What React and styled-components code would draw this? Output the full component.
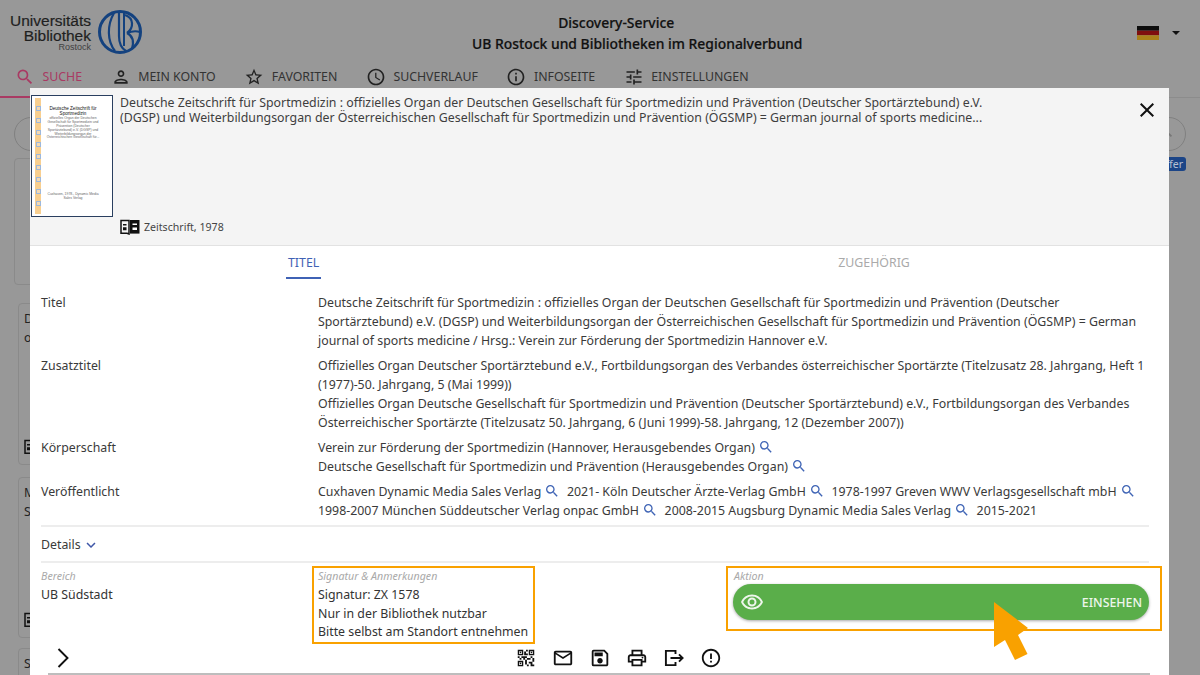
import React from "react";
import styled, { createGlobalStyle } from "styled-components";
import {
  MdAccessTime,
  MdClose,
  MdErrorOutline,
  MdExpandMore,
  MdInfoOutline,
  MdOutlineLocalPrintshop,
  MdOutlineMailOutline,
  MdOutlinePerson,
  MdOutlineRemoveRedEye,
  MdOutlineSave,
  MdOutlineTune,
  MdQrCode2,
  MdSearch,
  MdStarBorder,
} from "react-icons/md";

const GlobalStyle = createGlobalStyle`
  html, body {
    margin: 0;
    height: 100%;
    overflow: hidden;
    background: #989898;
  }
  body {
    font-family: "Noto Sans", "Open Sans", sans-serif;
    color: #3a3a3a;
  }
  * {
    box-sizing: border-box;
  }
`;

const navItems = [
  { label: "SUCHE", icon: MdSearch, active: true },
  { label: "MEIN KONTO", icon: MdOutlinePerson },
  { label: "FAVORITEN", icon: MdStarBorder },
  { label: "SUCHVERLAUF", icon: MdAccessTime },
  { label: "INFOSEITE", icon: MdInfoOutline },
  { label: "EINSTELLUNGEN", icon: MdOutlineTune },
];

const backgroundCards = [
  { height: 127, top: 0, left: 14, lines: [] },
  { height: 162, top: 18, left: 18, lines: ["D", "o"], icon: true },
  { height: 161, top: 12, left: 18, lines: ["M", "S"], icon: true },
  { height: 60, top: 10, left: 18, lines: ["S"] },
];

const Logo = () => (
  <LogoWrapper>
    <LogoText>
      <span>Universitäts</span>
      <span>Bibliothek</span>
      <small>Rostock</small>
    </LogoText>
    <svg width="46" height="46" viewBox="0 0 46 46" fill="none" stroke="#14427f">
      <circle cx="23" cy="23" r="20.5" strokeWidth="3" />
      <path d="M17 4C10 16 10 32 18 42" strokeWidth="2.2" />
      <path d="M22 3.5V27c0 8 2 12 7 15" strokeWidth="2.2" />
      <path d="M27 4v33" strokeWidth="2" />
      <path d="M28 6c9 3 9 13 2 18 5-2 10-2 13-1M30 24c6 3 7 9 5 16" strokeWidth="2.2" />
    </svg>
  </LogoWrapper>
);

const Flag = () => (
  <svg width="22" height="14" viewBox="0 0 22 14">
    <rect width="22" height="4.7" fill="#0d0d0d" />
    <rect y="4.7" width="22" height="4.6" fill="#7f0f0f" />
    <rect y="9.3" width="22" height="4.7" fill="#a9811a" />
  </svg>
);

const Thumbnail = () => (
  <Cover>
    <Strip>
      {Array.from({ length: 9 }).map((_, i) => (
        <StripHole key={i} />
      ))}
    </Strip>
    <CoverText>
      <CoverTitle>
        Deutsche Zeitschrift für
        <br />
        Sportmedizin
      </CoverTitle>
      <CoverBody>
        offizielles Organ der Deutschen
        <br />
        Gesellschaft für Sportmedizin und
        <br />
        Prävention (Deutscher
        <br />
        Sportärztebund) e.V. (DGSP) und
        <br />
        Weiterbildungsorgan der
        <br />
        Österreichischen Gesellschaft für...
      </CoverBody>
      <CoverFooter>
        Cuxhaven, 1978-, Dynamic Media
        <br />
        Sales Verlag
      </CoverFooter>
    </CoverText>
  </Cover>
);

const JournalIcon = () => (
  <svg width="20" height="16" viewBox="0 0 20 16">
    <path d="M1 1.5h8v13.5l-2-.8H1z" fill="none" stroke="#111" strokeWidth="1.5" />
    <path d="M10 1h9.5v13.6H10z" fill="#111" />
    <path d="M3 5h3.5v1.5H3zM3 8.3h3.5v3H3z" fill="#111" />
    <path d="M12.5 4.5h4.5v1.5h-4.5zM12.5 8.5h4.5v2.5h-4.5z" fill="#fff" />
  </svg>
);

const ExportIcon = () => (
  <svg width="22" height="22" viewBox="0 0 22 22" fill="none" stroke="#111" strokeWidth="1.9">
    <path d="M12.5 7V3.9H2.9v14.2h9.6V15" />
    <path d="M7.5 11h12M16 7.4l3.6 3.6-3.6 3.6" />
  </svg>
);

const ChevronIcon = () => (
  <svg width="12" height="20" viewBox="0 0 12 20" fill="none" stroke="#111" strokeWidth="1.9">
    <path d="M1.5 1l9 9-9 9" />
  </svg>
);

const Hit = () => (
  <SearchLink>
    <MdSearch />
  </SearchLink>
);

export default function App() {
  return (
    <>
      <GlobalStyle />
      <Page>
        <Header>
          <Logo />
          <HeaderTitle>
            <HeaderFirstLine>Discovery-Service</HeaderFirstLine>
            <div>UB Rostock und Bibliotheken im Regionalverbund</div>
          </HeaderTitle>
          <LanguageSwitch>
            <Flag />
            <Caret />
          </LanguageSwitch>
        </Header>

        <Nav>
          {navItems.map(({ label, icon: Icon, active }) => (
            <NavItem key={label} $active={active}>
              <Icon />
              {label}
            </NavItem>
          ))}
        </Nav>

        <SearchRow>
          <RoundField />
          <RoundField>
            <MdSearch />
          </RoundField>
        </SearchRow>
        <ResultBadge>Treffer</ResultBadge>

        <CardColumn>
          {backgroundCards.map((card, i) => (
            <ResultCard key={i} $height={card.height} $top={card.top} $left={card.left}>
              {card.lines.map((line) => (
                <div key={line}>{line}</div>
              ))}
              {card.icon && (
                <CardIconMark>
                  <JournalIcon />
                </CardIconMark>
              )}
            </ResultCard>
          ))}
        </CardColumn>

        <Modal>
          <ModalHeader>
            <Thumbnail />
            <ModalHeaderText>
              <ModalTitle>
                Deutsche Zeitschrift für Sportmedizin : offizielles Organ der Deutschen Gesellschaft für Sportmedizin und Prävention (Deutscher Sportärztebund) e.V.
                <br />
                (DGSP) und Weiterbildungsorgan der Österreichischen Gesellschaft für Sportmedizin und Prävention (ÖGSMP) = German journal of sports medicine...
              </ModalTitle>
              <MediaType>
                <JournalIcon />
                Zeitschrift, 1978
              </MediaType>
            </ModalHeaderText>
            <CloseButton>
              <MdClose />
            </CloseButton>
          </ModalHeader>

          <Tabs>
            <Tab $active>TITEL</Tab>
            <Tab>ZUGEHÖRIG</Tab>
          </Tabs>

          <Fields>
            <div>Titel</div>
            <div>
              Deutsche Zeitschrift für Sportmedizin : offizielles Organ der Deutschen Gesellschaft für Sportmedizin und Prävention (Deutscher Sportärztebund) e.V. (DGSP) und Weiterbildungsorgan der Österreichischen Gesellschaft für Sportmedizin und Prävention (ÖGSMP) = German journal of sports medicine / Hrsg.: Verein zur Förderung der Sportmedizin Hannover e.V.
            </div>

            <div>Zusatztitel</div>
            <div>
              Offizielles Organ Deutscher Sportärztebund e.V., Fortbildungsorgan des Verbandes österreichischer Sportärzte (Titelzusatz 28. Jahrgang, Heft 1 (1977)-50. Jahrgang, 5 (Mai 1999))
              <br />
              Offizielles Organ Deutsche Gesellschaft für Sportmedizin und Prävention (Deutscher Sportärztebund) e.V., Fortbildungsorgan des Verbandes Österreichischer Sportärzte (Titelzusatz 50. Jahrgang, 6 (Juni 1999)-58. Jahrgang, 12 (Dezember 2007))
            </div>

            <div>Körperschaft</div>
            <div>
              Verein zur Förderung der Sportmedizin (Hannover, Herausgebendes Organ) <Hit />
              <br />
              Deutsche Gesellschaft für Sportmedizin und Prävention (Herausgebendes Organ) <Hit />
            </div>

            <div>Veröffentlicht</div>
            <div>
              Cuxhaven Dynamic Media Sales Verlag <Hit /> &nbsp;2021- Köln Deutscher Ärzte-Verlag GmbH <Hit /> &nbsp;1978-1997 Greven WWV Verlagsgesellschaft mbH <Hit />
              <br />
              1998-2007 München Süddeutscher Verlag onpac GmbH <Hit /> &nbsp;2008-2015 Augsburg Dynamic Media Sales Verlag <Hit /> &nbsp;2015-2021
            </div>
          </Fields>

          <DetailsRow>
            Details
            <MdExpandMore />
          </DetailsRow>

          <Holdings>
            <HoldingArea>
              <Caption>Bereich</Caption>
              <HoldingLine>UB Südstadt</HoldingLine>
            </HoldingArea>
            <SignatureBox>
              <Caption>Signatur &amp; Anmerkungen</Caption>
              <HoldingLine>Signatur: ZX 1578</HoldingLine>
              <HoldingLine>Nur in der Bibliothek nutzbar</HoldingLine>
              <HoldingLine>Bitte selbst am Standort entnehmen</HoldingLine>
            </SignatureBox>
            <ActionBox>
              <Caption>Aktion</Caption>
              <ActionButton>
                <MdOutlineRemoveRedEye />
                EINSEHEN
              </ActionButton>
            </ActionBox>
          </Holdings>

          <Toolbar>
            <MoreButton>
              <ChevronIcon />
            </MoreButton>
            <ToolIcons>
              <MdQrCode2 />
              <MdOutlineMailOutline />
              <MdOutlineSave />
              <MdOutlineLocalPrintshop />
              <ExportIcon />
              <MdErrorOutline />
            </ToolIcons>
          </Toolbar>
          <BottomLine />
        </Modal>

        <Pointer width="36" height="60" viewBox="0 0 36 60">
          <path d="M1 1l34 26-10 7 9.5 19L22 59 12 39 1 46z" fill="#f9a100" />
        </Pointer>
      </Page>
    </>
  );
}

const Page = styled.div`
  position: relative;
  width: 1200px;
  height: 675px;
  overflow: hidden;
  background: #989898;
`;

const Header = styled.header`
  display: flex;
  align-items: center;
  height: 64px;
  padding: 0 20px 0 10px;
`;

const LogoWrapper = styled.div`
  display: flex;
  align-items: center;
  gap: 6px;
`;

const LogoText = styled.div`
  display: flex;
  flex-direction: column;
  align-items: flex-end;
  font-family: "Liberation Sans", Arial, sans-serif;
  font-size: 15.5px;
  line-height: 15px;
  color: #1f1f1f;
  -webkit-text-stroke: 0.2px #1f1f1f;

  small {
    font-size: 9px;
    line-height: 9px;
    color: #3f3f3f;
    -webkit-text-stroke: 0;
  }
`;

const HeaderTitle = styled.div`
  margin: 2px 0 0 329px;
  font-size: 13.9px;
  font-weight: 500;
  line-height: 21px;
  text-align: center;
  color: #111;
  -webkit-text-stroke: 0.2px #111;
`;

const HeaderFirstLine = styled.div`
  padding-right: 42px;
`;

const LanguageSwitch = styled.div`
  display: flex;
  align-items: center;
  gap: 13px;
  margin: 2px 0 0 auto;
`;

const Caret = styled.span`
  width: 0;
  height: 0;
  border-left: 4.5px solid transparent;
  border-right: 4.5px solid transparent;
  border-top: 4px solid #111;
`;

const Nav = styled.nav`
  position: relative;
  display: flex;
  height: 34px;
  padding-left: 15px;
  gap: 28.6px;
  border-bottom: 1px solid #8c8c8c;

  &::after {
    content: "";
    position: absolute;
    left: 0;
    bottom: -1px;
    width: 84px;
    height: 2px;
    background: #a93a63;
  }
`;

const NavItem = styled.div`
  display: flex;
  align-items: center;
  gap: 7.5px;
  height: 25px;
  font-size: 12.35px;
  color: ${(p) => (p.$active ? "#a93a63" : "#333")};

  svg {
    width: 20px;
    height: 20px;
    color: ${(p) => (p.$active ? "#a93a63" : "#222")};
  }
`;

const SearchRow = styled.div`
  display: flex;
  justify-content: space-between;
  padding: 19px 14px 0;
`;

const RoundField = styled.div`
  display: flex;
  align-items: center;
  width: 34px;
  height: 34px;
  padding: 0 0 8px 2px;
  border: 1px solid #808080;
  border-radius: 50%;
  color: #777;

  svg {
    width: 20px;
    height: 20px;
  }
`;

const ResultBadge = styled.span`
  position: absolute;
  top: 157px;
  right: 14px;
  padding: 0 3px;
  border-radius: 3px;
  background: #1c4587;
  font-size: 10.5px;
  line-height: 14px;
  color: #b6c0d2;
`;

const CardColumn = styled.div`
  display: flex;
  flex-direction: column;
  width: 60px;
  padding-top: 7px;
`;

const ResultCard = styled.div`
  position: relative;
  flex: none;
  height: ${(p) => p.$height}px;
  margin: ${(p) => p.$top}px 0 0 ${(p) => p.$left}px;
  padding: 5px 0 0 5px;
  border: 1px solid #8a8a8a;
  border-radius: 4px;
  font-size: 12.35px;
  line-height: 19px;
  color: #222;
`;

const CardIconMark = styled.span`
  position: absolute;
  left: 5px;
  bottom: 9px;
  display: flex;
`;

const Modal = styled.div`
  position: absolute;
  top: 88px;
  left: 30px;
  width: 1139px;
  height: 587px;
  background: #fff;
  display: flex;
  flex-direction: column;
  overflow: hidden;

  & > * {
    flex: none;
  }
`;

const ModalHeader = styled.div`
  position: relative;
  display: flex;
  gap: 7px;
  height: 158px;
  padding: 7px 0 0 1px;
  background: #f4f4f4;
  border-bottom: 1px solid #e2e2e2;
`;

const Cover = styled.div`
  display: flex;
  width: 82px;
  height: 122px;
  padding: 2px 3px;
  gap: 1px;
  background: #fff;
  border: 1px solid #2a3f5f;
`;

const Strip = styled.div`
  display: flex;
  flex-direction: column;
  justify-content: space-between;
  align-items: center;
  width: 6px;
  padding: 8px 0;
  background: #f8cf90;
`;

const StripHole = styled.span`
  width: 5px;
  height: 5px;
  background: #f4d9b2;
  border: 1px solid #9db8dc;
`;

const CoverText = styled.div`
  flex: 1;
  display: flex;
  flex-direction: column;
  padding: 8px 5px 13px 0;
  text-align: center;
  white-space: nowrap;
  font-family: "Liberation Sans", Arial, sans-serif;
`;

const CoverTitle = styled.div`
  font-size: 4.6px;
  line-height: 5.2px;
  color: #111;
  padding-bottom: 1px;
`;

const CoverBody = styled.div`
  font-size: 3.4px;
  line-height: 3.8px;
  color: #666;
`;

const CoverFooter = styled.div`
  margin-top: auto;
  font-size: 3.4px;
  line-height: 3.8px;
  color: #666;
`;

const ModalHeaderText = styled.div`
  display: flex;
  flex-direction: column;
  justify-content: space-between;
  padding-bottom: 10px;
  flex: 1;
`;

const ModalTitle = styled.div`
  font-size: 12.35px;
  line-height: 15px;
  color: #3e3e3e;
`;

const MediaType = styled.div`
  display: flex;
  align-items: center;
  gap: 4px;
  font-size: 10.6px;
  line-height: 16px;
  color: #444;
`;

const CloseButton = styled.span`
  position: absolute;
  top: 10px;
  right: 10px;
  display: flex;
  color: #111;

  svg {
    width: 24px;
    height: 24px;
  }
`;

const Tabs = styled.div`
  display: flex;
  gap: 515px;
  height: 33px;
  padding-left: 256px;
`;

const Tab = styled.div`
  height: 33px;
  padding: 0 2px;
  font-size: 12.35px;
  line-height: 34px;
  color: ${(p) => (p.$active ? "#3f62b5" : "#aaa")};
  border-bottom: ${(p) => (p.$active ? "2px solid #3f62b5" : "none")};
`;

const Fields = styled.div`
  display: grid;
  grid-template-columns: 277px 1fr;
  row-gap: 6px;
  margin: 13.5px 20px 0 11px;
  padding-bottom: 5.6px;
  border-bottom: 2px solid #ededed;
  font-size: 12.35px;
  line-height: 19px;
  color: #3a3a3a;
`;

const SearchLink = styled.span`
  display: inline-flex;
  vertical-align: -3px;
  color: #3f64b5;

  svg {
    width: 16px;
    height: 16px;
  }
`;

const DetailsRow = styled.div`
  display: flex;
  align-items: center;
  gap: 1px;
  height: 36px;
  padding-top: 1px;
  margin: 0 20px 0 11px;
  border-bottom: 2px solid #ededed;
  font-size: 12.35px;

  svg {
    width: 18px;
    height: 18px;
    color: #3f57a8;
  }
`;

const Holdings = styled.div`
  display: flex;
  padding: 3px 0 0 11px;
  height: 82px;
`;

const HoldingArea = styled.div`
  width: 271px;
  padding-top: 3px;
`;

const Caption = styled.div`
  margin-bottom: 3px;
  font-size: 10.65px;
  font-style: italic;
  line-height: 14px;
  color: #a9a9a9;
`;

const HoldingLine = styled.div`
  font-size: 12.35px;
  line-height: 18.4px;
  color: #333;
`;

const SignatureBox = styled.div`
  width: 223px;
  height: 78px;
  padding: 1px 4px;
  border: 2px solid #f9a100;
`;

const ActionBox = styled.div`
  width: 436px;
  height: 65px;
  margin-left: 191px;
  padding: 1px 11px 0 5px;
  border: 2px solid #f9a100;

  ${Caption} {
    margin-left: 1px;
  }
`;

const ActionButton = styled.div`
  display: flex;
  align-items: center;
  justify-content: space-between;
  height: 36px;
  margin-top: -2px;
  padding: 0 7px;
  border-radius: 18px;
  background: #5aae4a;
  box-shadow: 0 1px 3px rgba(0, 0, 0, 0.35);
  font-size: 12.35px;
  font-weight: 500;
  color: #eef6ec;

  svg {
    width: 24px;
    height: 24px;
  }
`;

const Toolbar = styled.div`
  display: flex;
  align-items: center;
  height: 30px;
  margin-top: -2px;
  padding-left: 27px;
`;

const MoreButton = styled.span`
  display: flex;
  width: 23px;
`;

const ToolIcons = styled.div`
  display: flex;
  align-items: center;
  gap: 15px;
  margin-left: 435px;
  color: #111;

  svg {
    width: 22px;
    height: 22px;
  }
`;

const BottomLine = styled.div`
  height: 2px;
  margin: 0 19px 0 18px;
  background: #bdbdbd;
`;

const Pointer = styled.svg`
  position: absolute;
  top: 601px;
  left: 993px;
`;
